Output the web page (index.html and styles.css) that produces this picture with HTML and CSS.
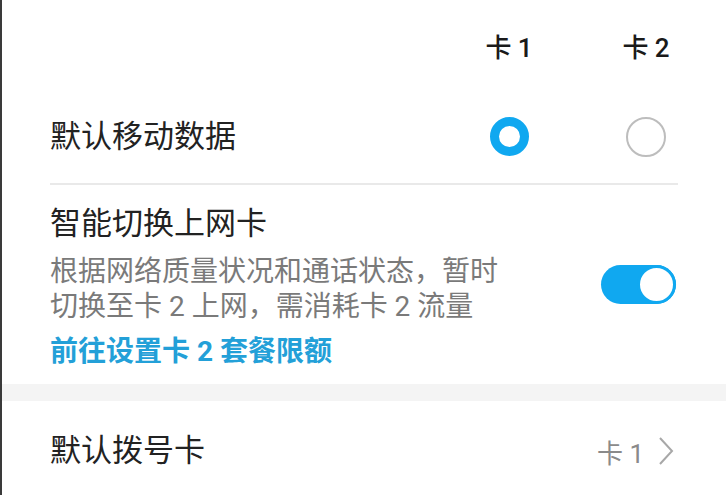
FILE: index.html
```html
<!DOCTYPE html>
<html lang="zh-CN">
<head>
    <meta charset="UTF-8">
    <meta name="viewport" content="width=device-width, initial-scale=1.0">
    <title>双卡管理</title>
    <link rel="stylesheet" href="styles.css">
</head>
<body>
    <div class="page">
        <!-- 默认移动数据 -->
        <section class="group">
            <div class="row head">
                <div class="label"></div>
                <div class="cell">卡 1</div>
                <div class="cell">卡 2</div>
            </div>
            <div class="row data">
                <div class="label">默认移动数据</div>
                <div class="cell"><span class="radio on"></span></div>
                <div class="cell"><span class="radio"></span></div>
            </div>
            <div class="divider"></div>
        </section>

        <!-- 智能切换 -->
        <section class="smart">
            <div class="smart-text">
                <div class="title">智能切换上网卡</div>
                <p class="desc">根据网络质量状况和通话状态，暂时<br>切换至卡 2 上网，需消耗卡 2 流量</p>
                <a class="link" href="#">前往设置卡 2 套餐限额</a>
            </div>
            <span class="switch on"><span class="knob"></span></span>
        </section>

        <div class="band"></div>

        <!-- 默认拨号卡 -->
        <section class="dial">
            <div class="label">默认拨号卡</div>
            <div class="value">
                卡 1
                <svg class="chevron" width="16" height="30" viewBox="0 0 16 30">
                    <path d="M2 2 L14 15 L2 28" fill="none" stroke="#a8a8a8" stroke-width="2"/>
                </svg>
            </div>
        </section>
    </div>
</body>
</html>
```

FILE: styles.css
```css
body {
    margin: 0;
    background-color: #fff;
    font-family: Roboto, "Noto Sans CJK SC", sans-serif;
    color: #222;
}

.page {
    height: 495px;
    border-left: 2px solid #3a3a3a;
    overflow: hidden;
}

.row {
    display: flex;
    align-items: center;
    padding: 0 50px 0 48px;
}

.row .label {
    flex: 1;
}

.cell {
    width: 60px;
    display: flex;
    justify-content: center;
    align-items: center;
}

.cell + .cell {
    margin-left: 77px;
}

.head {
    height: 90px;
    font-size: 26px;
    font-weight: 500;
    color: #1a1a1a;
}

.data {
    height: 93px;
}

.label {
    font-size: 31px;
    line-height: 40px;
}

/* 单选按钮 */
.radio {
    box-sizing: border-box;
    width: 40px;
    height: 40px;
    border-radius: 50%;
    border: 2px solid #bdbdbd;
    background: #fff;
}

.radio.on {
    border: 9px solid #10a8f0;
    width: 39px;
    height: 39px;
}

.divider {
    height: 2px;
    margin: 0 48px 0 48px;
    background-color: #e9e9e9;
}

/* 智能切换上网卡 */
.smart {
    display: flex;
    align-items: center;
    padding: 19px 50px 14px 48px;
}

.smart-text {
    flex: 1;
}

.title {
    font-size: 31px;
    line-height: 40px;
}

.desc {
    margin: 10px 0 0 0;
    font-size: 28px;
    line-height: 35px;
    color: #7a7a7a;
}

.link {
    display: block;
    margin-top: 10px;
    font-size: 28px;
    line-height: 36px;
    font-weight: bold;
    color: #23a0d8;
    text-decoration: none;
}

.switch {
    box-sizing: border-box;
    width: 75px;
    height: 39px;
    border-radius: 20px;
    background-color: #10a8f0;
    display: flex;
    justify-content: flex-end;
    margin-bottom: 6px;
}

.knob {
    box-sizing: border-box;
    width: 39px;
    height: 39px;
    border-radius: 50%;
    background: #fff;
    border: 3px solid #10a8f0;
}

.band {
    height: 17px;
    background-color: #f4f4f4;
}

/* 默认拨号卡 */
.dial {
    display: flex;
    align-items: center;
    height: 100px;
    padding: 0 52px 0 48px;
}

.dial .label {
    flex: 1;
}

.value {
    display: flex;
    align-items: center;
    font-size: 26px;
    color: #8a8a8a;
}

.chevron {
    margin-left: 14px;
}
```
